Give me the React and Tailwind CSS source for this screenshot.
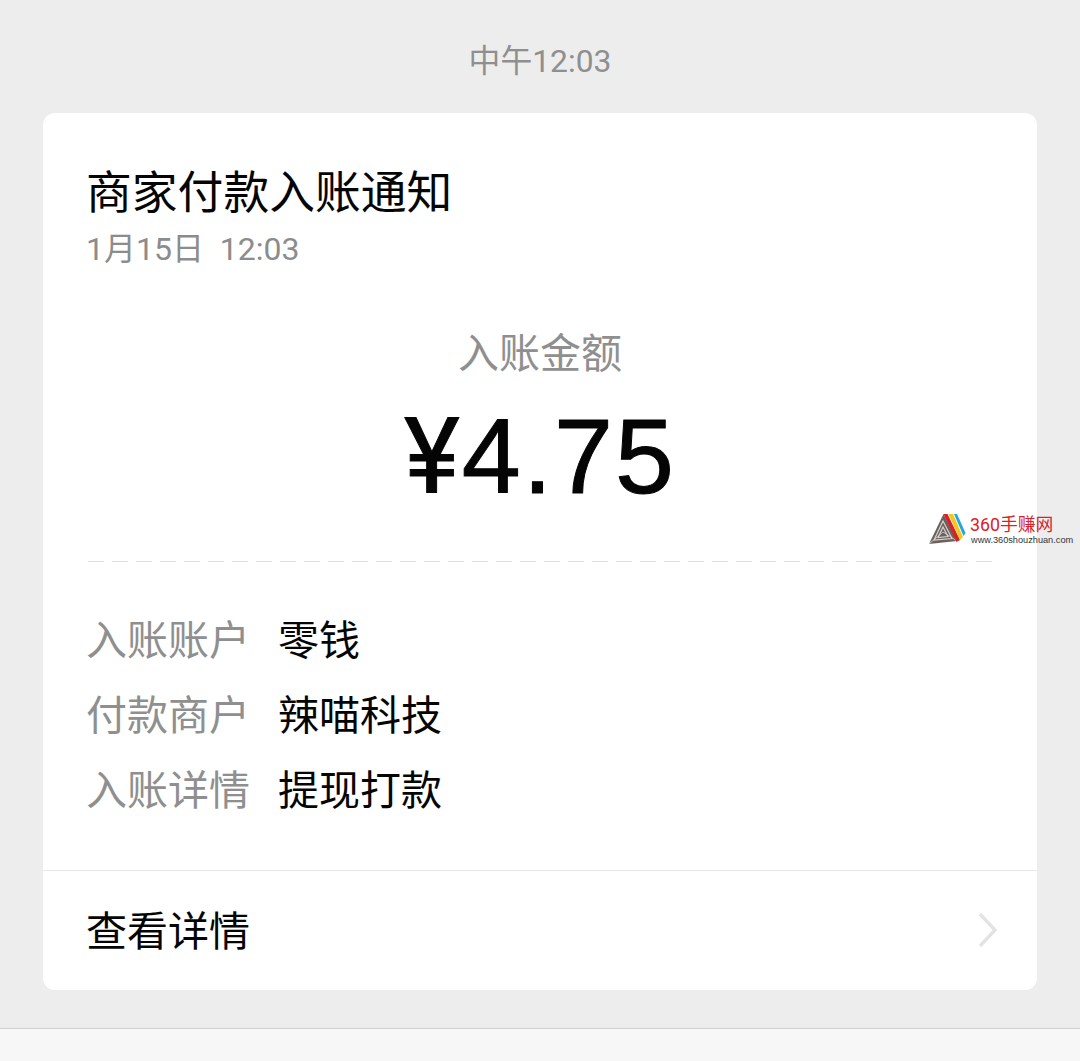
const FONT = "font-['Roboto','Noto_Sans_CJK_SC',sans-serif]";

const rows = [
  ["入账账户", "零钱"],
  ["付款商户", "辣喵科技"],
  ["入账详情", "提现打款"],
];

function Watermark() {
  return (
    <div className="absolute left-[928px] top-[513px] flex items-start">
      <svg width="38" height="34" viewBox="0 0 38 34">
        <path d="M15.5 1 L1 31 L29 28 Z" fill="#6b625e" />
        <path d="M15 8 L6 27 L24 25.5 Z" fill="none" stroke="#d8d3d0" strokeWidth="1.2" />
        <path d="M15 14 L10 24.5 L20 23.5 Z" fill="none" stroke="#d8d3d0" strokeWidth="1.2" />
        <path d="M1 31 L15 19 L29 28" fill="none" stroke="#d8d3d0" strokeWidth="0.8" />
        <path d="M15.5 1 L19.5 1 L32 27 L28.5 29 Z" fill="#d9202a" />
        <path d="M20.5 1 L25 1 L35 24 L32 27 Z" fill="#f3c81e" />
        <path d="M26 1 L29 1 L37.5 20 L35.5 23 Z" fill="#25a5dd" />
      </svg>
      <div className="ml-[4px] flex flex-col">
        <span className="text-[17.8px] leading-[20px] mt-[2px] text-[#dc2028] font-['Roboto','Noto_Sans_CJK_SC',sans-serif]">
          360手赚网
        </span>
        <span className="text-[9.2px] leading-[10px] text-[#333] font-['Liberation_Sans',sans-serif] whitespace-nowrap ml-[1px]">
          www.360shouzhuan.com
        </span>
      </div>
    </div>
  );
}

function App() {
  return (
    <div className={`relative w-[1080px] h-[1061px] overflow-hidden bg-[#ededed] flex flex-col ${FONT}`}>
      <div className="h-[113px] shrink-0 flex items-center justify-center pt-[11px] text-[31.8px] text-[#8f8f8f]">
        中午12:03
      </div>

      <div className="mx-[43px] h-[877px] shrink-0 bg-white rounded-[12px] flex flex-col">
        <div className="px-[43px] pt-[51px]">
          <div className="text-[45.8px] leading-[60px] text-[#050505]">商家付款入账通知</div>
          <div className="text-[32px] leading-[44px] mt-[3px] text-[#8c8c8c] whitespace-pre">1月15日  12:03</div>
        </div>

        <div className="mt-[55px] text-center text-[41px] leading-[56px] text-[#8f8f8f]">入账金额</div>
        <div className="mt-[12px] text-center text-[106px] leading-[124px] tracking-[2px] text-[#050505] font-['Liberation_Sans',sans-serif] [-webkit-text-stroke:1px_#050505]">
          <span className="font-['Roboto',sans-serif]">¥</span>4.75
        </div>

        <div className="mx-[43px] mt-[42px] h-px bg-[repeating-linear-gradient(90deg,transparent_0,transparent_2px,#e0e0e0_2px,#e0e0e0_18px,transparent_18px,transparent_24px)]" />

        <div className="px-[43px] pt-[51px] flex flex-col gap-[19px]">
          {rows.map(([label, value]) => (
            <div key={label} className="flex text-[41px] leading-[56px]">
              <span className="w-[192px] text-[#8f8f8f]">{label}</span>
              <span className="text-[#050505]">{value}</span>
            </div>
          ))}
        </div>

        <div className="mt-auto h-[120px] border-t border-[#e6e6e6] pl-[43px] pr-[38px] pt-[5px] flex items-center justify-between">
          <span className="text-[41px] text-[#050505]">查看详情</span>
          <svg className="-mt-[7px]" width="22" height="36" viewBox="0 0 22 36" fill="none">
            <path d="M3 2 L18 18 L3 34" stroke="#e3e3e3" strokeWidth="3.4" />
          </svg>
        </div>
      </div>

      <div className="mt-[38px] flex-1 bg-[#f7f7f7] border-t border-[#d0d0d0]" />

      <Watermark />
    </div>
  );
}

export default App;
